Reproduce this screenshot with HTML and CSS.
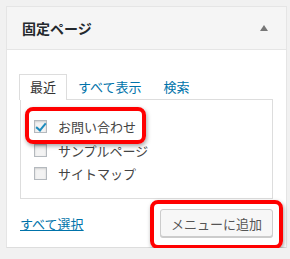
FILE: index.html
```html
<!DOCTYPE html>
<html lang="ja">
<head>
  <meta charset="UTF-8">
  <title>固定ページ</title>
  <link rel="stylesheet" href="styles.css">
</head>
<body>

  <div class="postbox">
    <div class="postbox-header">
      <h3>固定ページ</h3>
      <span class="toggle-arrow"></span>
    </div>

    <div class="postbox-inside">
      <ul class="tabs">
        <li class="tab active">最近</li>
        <li class="tab"><a href="#">すべて表示</a></li>
        <li class="tab"><a href="#">検索</a></li>
      </ul>

      <div class="tab-panel">
        <ul class="checklist">
          <li><label><input type="checkbox" checked> お問い合わせ</label></li>
          <li><label><input type="checkbox"> サンプルページ</label></li>
          <li><label><input type="checkbox"> サイトマップ</label></li>
        </ul>
      </div>

      <div class="button-row">
        <a href="#" class="select-all">すべて選択</a>
        <button class="add-btn">メニューに追加</button>
      </div>
    </div>

    <!-- annotation marks -->
    <div class="mark mark-item"></div>
    <div class="mark mark-btn"></div>
  </div>

</body>
</html>
```

FILE: styles.css
```css
body {
  margin: 0;
  background: #f1f1f1;
  font-family: "Noto Sans CJK JP", "Noto Sans", sans-serif;
  font-size: 13px;
  color: #444;
}

.postbox {
  position: relative;
  margin: 6px 0 0 6px;
  width: 281px;
  background: #fff;
  border: 1px solid #e5e5e5;
  border-bottom: 1px solid #ddd;
  box-sizing: border-box;
}

.postbox-header {
  display: flex;
  align-items: center;
  justify-content: space-between;
  height: 42px;
  padding: 0 15px;
  background: #f5f5f5;
  border-bottom: 1px solid #e5e5e5;
}

.postbox-header h3 {
  margin: 0;
  font-size: 14px;
  font-weight: bold;
  color: #23282d;
}

.toggle-arrow {
  width: 0;
  height: 0;
  margin-right: 3px;
  border-left: 4px solid transparent;
  border-right: 4px solid transparent;
  border-bottom: 6px solid #777;
}

.postbox-inside {
  padding: 24px 12px 10px 12px;
}

.tabs {
  display: flex;
  margin: 0;
  padding: 0;
  list-style: none;
}

.tab {
  padding: 0 10px;
  height: 25px;
  line-height: 24px;
  border: 1px solid transparent;
  border-bottom: none;
  box-sizing: border-box;
}

.tab a {
  color: #0073aa;
  text-decoration: none;
}

.tab.active {
  color: #333;
  background: #fff;
  border-color: #ddd;
  margin-bottom: -1px;
  height: 26px;
  position: relative;
}

.tab-panel {
  width: 253px;
  margin-left: 1px;
  height: 100px;
  border: 1px solid #ddd;
  box-sizing: border-box;
  padding: 15px 13px;
}

.checklist {
  margin: 0;
  padding: 0;
  list-style: none;
}

.checklist li {
  height: 23.5px;
  line-height: 23px;
}

.checklist label {
  display: flex;
  align-items: center;
  gap: 11px;
}

.checklist input {
  appearance: none;
  width: 13px;
  height: 13px;
  margin: 0;
  border: 1px solid #b4b9be;
  background: #f3f3f3;
  box-shadow: inset 0 1px 2px rgba(0,0,0,0.15);
  position: relative;
}

.checklist input:checked::after {
  content: "";
  position: absolute;
  left: 3px;
  top: 0px;
  width: 4px;
  height: 8px;
  border-right: 2px solid #1e8cbe;
  border-bottom: 2px solid #1e8cbe;
  transform: rotate(40deg);
}

.button-row {
  display: flex;
  align-items: center;
  justify-content: space-between;
  margin-top: 10px;
  width: 254px;
}

.select-all {
  color: #0073aa;
  text-decoration: underline;
  margin-left: 1px;
}

.add-btn {
  height: 28px;
  padding: 0 10px;
  font-family: inherit;
  font-size: 13px;
  color: #555;
  background: #f7f7f7;
  border: 1px solid #ccc;
  border-radius: 3px;
  box-shadow: 0 1px 0 #ccc;
}

.mark {
  position: absolute;
  border: 4px solid #f00;
  border-radius: 8px;
  box-shadow: 1px 2px 4px rgba(0,0,0,0.35);
  box-sizing: border-box;
}

.mark-item {
  left: 18px;
  top: 100px;
  width: 121px;
  height: 37px;
}

.mark-btn {
  left: 143px;
  top: 193px;
  width: 133px;
  height: 49px;
}
```
